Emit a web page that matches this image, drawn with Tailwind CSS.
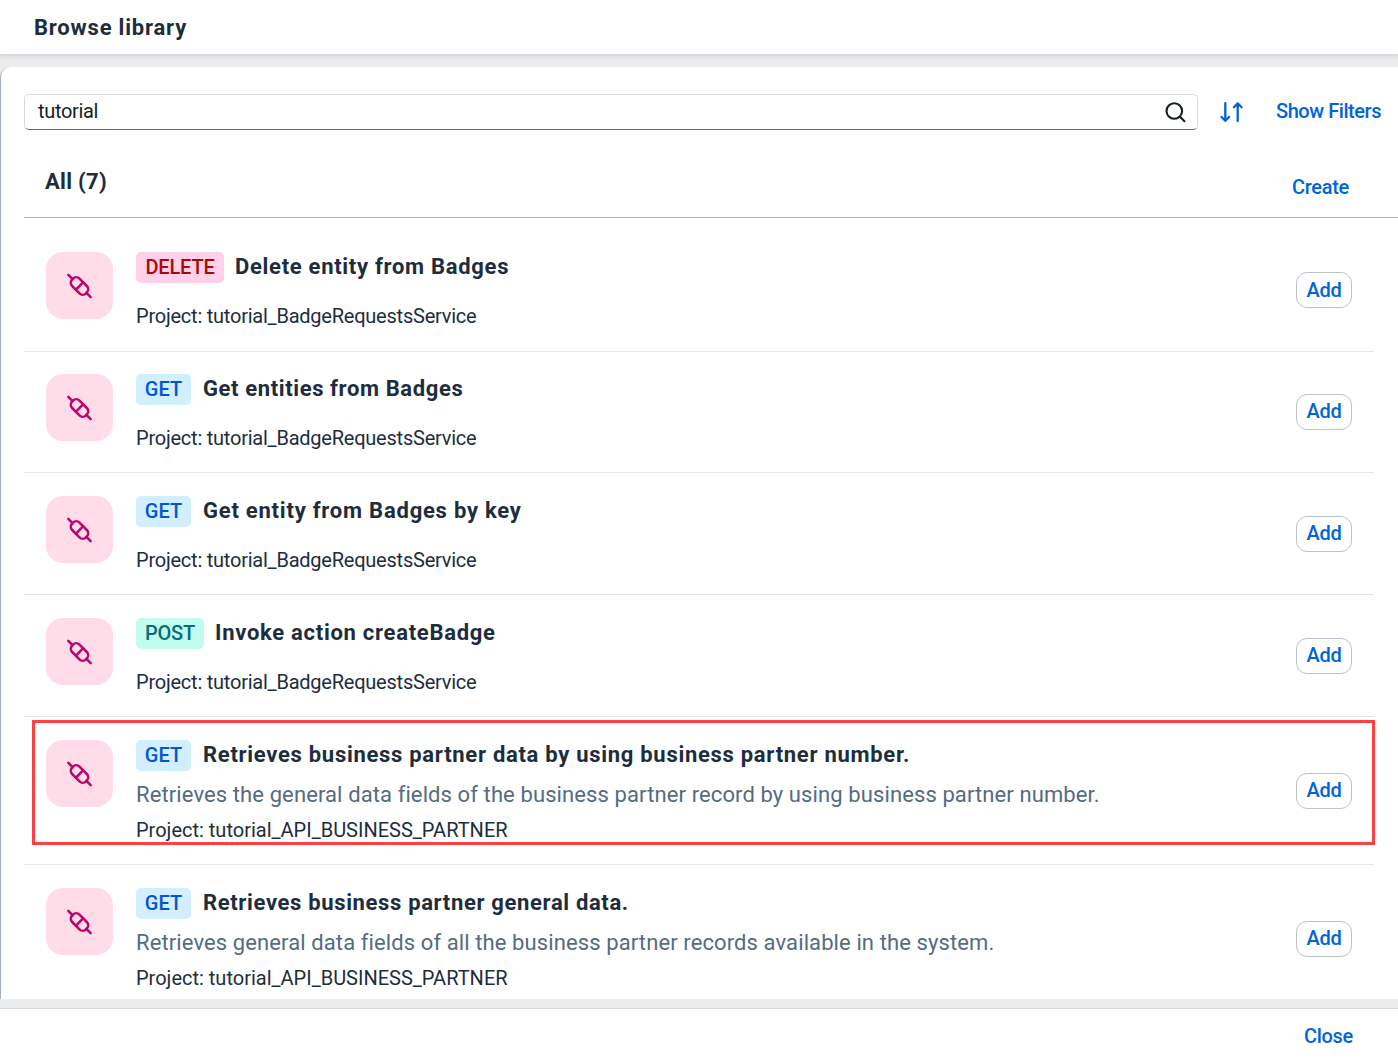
<!DOCTYPE html>
<html lang="en">
<head>
<meta charset="utf-8">
<title>Browse library</title>
<script src="https://cdn.jsdelivr.net/npm/@tailwindcss/browser@4"></script>
</head>
<body class="h-[1062px] overflow-hidden bg-[#eaecee] font-['Roboto',sans-serif] text-[20px] leading-6 text-[#1d2d3e]">
<svg class="hidden">
  <symbol id="plug" viewBox="0 0 28 28">
    <g fill="none" stroke="#ba066c" stroke-width="2.5" stroke-linecap="round" transform="translate(-.5 0) rotate(45 14 14)">
      <rect x="4.2" y="8.8" width="19.6" height="10.4" rx="4.6"/>
      <path d="M14 9v10M4.2 14H-1.8M23.8 14h6"/>
    </g>
  </symbol>
</svg>
<div class="relative flex h-full flex-col">
  <header class="z-10 flex h-[54px] shrink-0 items-center bg-white pt-0.5 pl-[34px] shadow-[0_1px_0_#d9d9d9,0_2px_4px_rgba(34,53,72,0.14)]">
    <h1 class="text-[22px] leading-7 font-bold tracking-[0.8px]">Browse library</h1>
  </header>

  <main class="mt-[13px] h-[932px] shrink-0 overflow-hidden rounded-tl-[10px] border-l border-[#a8b3bd] bg-white pl-[23px]">
    <div class="flex h-[63px] items-end">
      <div class="flex h-9 w-[1174px] shrink-0 items-center justify-between rounded-[5px] border border-[#d5dae0] border-b-[#556b82] pr-[10px] pl-[13px]">
        <span class="-mt-0.5 tracking-[-0.34px] text-[#131e29]">tutorial</span>
        <svg class="h-6 w-6" viewBox="0 0 24 24" fill="none" stroke="#131e29" stroke-width="2.1" stroke-linecap="round"><circle cx="11.3" cy="11" r="7.8"/><path d="M17 16.8l4.4 4.4"/></svg>
      </div>
      <svg class="mb-1.5 ml-[21px] h-6 w-6 shrink-0" viewBox="0 0 24 24" fill="none" stroke="#0064d9" stroke-width="2.3" stroke-linecap="round" stroke-linejoin="round"><path d="M6.3 3.2v17.6M2.5 17l3.8 3.8 3.8-3.8M18.7 21V3.4M14.9 7.2l3.8-3.8 3.8 3.8"/></svg>
      <span class="mb-[7px] ml-[33px] font-medium tracking-[-0.44px] whitespace-nowrap text-[#0064d9]">Show Filters</span>
    </div>
    <div class="flex h-[88px] items-start justify-between border-b border-[#a8b3bd] pr-[49px] pl-[21px]">
      <h2 class="mt-[38px] text-[22px] leading-7 font-bold tracking-[0.3px]">All (7)</h2>
      <span class="mt-[45px] font-medium tracking-[-0.3px] text-[#0064d9]">Create</span>
    </div>

    <ul class="w-[1350px]">
      <li class="flex h-[134px] items-start border-b border-[#e5e5e5] pt-[34px] pr-[22px] pl-[22px]">
        <div class="flex h-[67px] w-[67px] shrink-0 items-center justify-center rounded-[17px] bg-[#ffdce8]"><svg class="h-7 w-7"><use href="#plug"/></svg></div>
        <div class="ml-[23px] flex-1">
          <div class="flex items-start"><span class="h-[31px] w-[88px] rounded-[5px] bg-[#ffd0e7] text-center leading-[31px] font-medium tracking-[-0.19px] text-[#aa0808]">DELETE</span><h3 class="ml-[11px] text-[22px] leading-[29px] font-bold tracking-[0.7px]">Delete entity from Badges</h3></div>
          <p class="mt-[21px] tracking-[-0.23px]">Project: tutorial_BadgeRequestsService</p>
        </div>
        <button class="mt-5 h-9 w-14 rounded-[11px] border border-[#bcc3ca] font-medium tracking-[-0.27px] text-[#0064d9]">Add</button>
      </li>
      <li class="flex h-[121px] items-start border-b border-[#e5e5e5] pt-[22px] pr-[22px] pl-[22px]">
        <div class="flex h-[67px] w-[67px] shrink-0 items-center justify-center rounded-[17px] bg-[#ffdce8]"><svg class="h-7 w-7"><use href="#plug"/></svg></div>
        <div class="ml-[23px] flex-1">
          <div class="flex items-start"><span class="h-[31px] w-[55px] rounded-[5px] bg-[#d1efff] text-center leading-[31px] font-medium text-[#0057d2]">GET</span><h3 class="ml-[12px] text-[22px] leading-[29px] font-bold tracking-[0.61px]">Get entities from Badges</h3></div>
          <p class="mt-[21px] tracking-[-0.23px]">Project: tutorial_BadgeRequestsService</p>
        </div>
        <button class="mt-5 h-9 w-14 rounded-[11px] border border-[#bcc3ca] pb-0.5 font-medium tracking-[-0.27px] text-[#0064d9]">Add</button>
      </li>
      <li class="flex h-[122px] items-start border-b border-[#e5e5e5] pt-[23px] pr-[22px] pl-[22px]">
        <div class="flex h-[67px] w-[67px] shrink-0 items-center justify-center rounded-[17px] bg-[#ffdce8]"><svg class="h-7 w-7"><use href="#plug"/></svg></div>
        <div class="ml-[23px] flex-1">
          <div class="flex items-start"><span class="h-[31px] w-[55px] rounded-[5px] bg-[#d1efff] text-center leading-[31px] font-medium text-[#0057d2]">GET</span><h3 class="ml-[12px] text-[22px] leading-[29px] font-bold tracking-[0.77px]">Get entity from Badges by key</h3></div>
          <p class="mt-[21px] tracking-[-0.23px]">Project: tutorial_BadgeRequestsService</p>
        </div>
        <button class="mt-5 h-9 w-14 rounded-[11px] border border-[#bcc3ca] pb-0.5 font-medium tracking-[-0.27px] text-[#0064d9]">Add</button>
      </li>
      <li class="flex h-[122px] items-start border-b border-[#e5e5e5] pt-[23px] pr-[22px] pl-[22px]">
        <div class="flex h-[67px] w-[67px] shrink-0 items-center justify-center rounded-[17px] bg-[#ffdce8]"><svg class="h-7 w-7"><use href="#plug"/></svg></div>
        <div class="ml-[23px] flex-1">
          <div class="flex items-start"><span class="h-[31px] w-[68px] rounded-[5px] bg-[#c2fcee] text-center leading-[31px] font-medium tracking-[-0.2px] text-[#046c7a]">POST</span><h3 class="ml-[11px] text-[22px] leading-[29px] font-bold tracking-[0.72px]">Invoke action createBadge</h3></div>
          <p class="mt-[21px] tracking-[-0.23px]">Project: tutorial_BadgeRequestsService</p>
        </div>
        <button class="mt-5 h-9 w-14 rounded-[11px] border border-[#bcc3ca] pb-0.5 font-medium tracking-[-0.27px] text-[#0064d9]">Add</button>
      </li>
      <li class="flex h-[148px] items-start border-b border-[#e5e5e5] pt-[23px] pr-[22px] pl-[22px]">
        <div class="flex h-[67px] w-[67px] shrink-0 items-center justify-center rounded-[17px] bg-[#ffdce8]"><svg class="h-7 w-7"><use href="#plug"/></svg></div>
        <div class="ml-[23px] flex-1">
          <div class="flex items-start"><span class="h-[31px] w-[55px] rounded-[5px] bg-[#d1efff] text-center leading-[31px] font-medium text-[#0057d2]">GET</span><h3 class="ml-[12px] text-[22px] leading-[29px] font-bold tracking-[0.71px]">Retrieves business partner data by using business partner number.</h3></div>
          <p class="mt-[11px] text-[22px] leading-[26px] tracking-[0.105px] text-[#556b82]">Retrieves the general data fields of the business partner record by using business partner number.</p>
          <p class="mt-[10px]">Project: tutorial_API_BUSINESS_PARTNER</p>
        </div>
        <button class="mt-[33px] h-9 w-14 rounded-[11px] border border-[#bcc3ca] pb-0.5 font-medium tracking-[-0.27px] text-[#0064d9]">Add</button>
      </li>
      <li class="flex h-[148px] items-start pt-[23px] pr-[22px] pl-[22px]">
        <div class="flex h-[67px] w-[67px] shrink-0 items-center justify-center rounded-[17px] bg-[#ffdce8]"><svg class="h-7 w-7"><use href="#plug"/></svg></div>
        <div class="ml-[23px] flex-1">
          <div class="flex items-start"><span class="h-[31px] w-[55px] rounded-[5px] bg-[#d1efff] text-center leading-[31px] font-medium text-[#0057d2]">GET</span><h3 class="ml-[12px] text-[22px] leading-[29px] font-bold tracking-[0.65px]">Retrieves business partner general data.</h3></div>
          <p class="mt-[11px] text-[22px] leading-[26px] tracking-[0.105px] text-[#556b82]">Retrieves general data fields of all the business partner records available in the system.</p>
          <p class="mt-[10px]">Project: tutorial_API_BUSINESS_PARTNER</p>
        </div>
        <button class="mt-[33px] h-9 w-14 rounded-[11px] border border-[#bcc3ca] pb-0.5 font-medium tracking-[-0.27px] text-[#0064d9]">Add</button>
      </li>
    </ul>
  </main>

  <footer class="mt-[9px] flex flex-1 items-center justify-end border-t border-[#d9d9d9] bg-white pr-[45px]">
    <span class="font-medium tracking-[-0.3px] text-[#0064d9]">Close</span>
  </footer>

  <!-- Highlight around the fifth entry -->
  <div class="pointer-events-none absolute top-[720px] left-8 h-[125px] w-[1343px] border-[3px] border-[#fe4142]"></div>
</div>
</body>
</html>
